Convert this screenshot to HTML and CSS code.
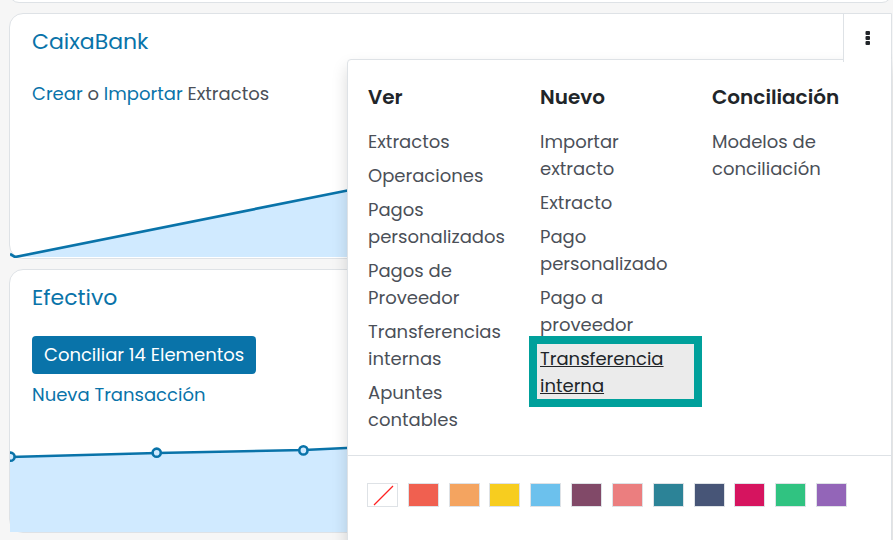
FILE: index.html
```html
<!DOCTYPE html>
<html lang="es">
<head>
<meta charset="utf-8">
<title>Contabilidad</title>
<link rel="stylesheet" href="styles.css">
</head>
<body>
<main class="board">
  <section class="card card-previous"></section>

  <section class="card card-bank">
    <header class="card-head">
      <h2 class="card-title"><a href="#">CaixaBank</a></h2>
      <button class="kebab" type="button" aria-label="Opciones" aria-expanded="true">
        <svg width="6" height="16" viewBox="0 0 6 16" aria-hidden="true"><g fill="#212529"><rect x="0.5" y="1" width="4.5" height="4" rx="1"/><rect x="0.5" y="6" width="4.5" height="4" rx="1"/><rect x="0.5" y="11" width="4.5" height="4" rx="1"/></g></svg>
      </button>
    </header>
    <p class="card-text"><a href="#">Crear</a> o <a href="#">Importar</a> Extractos</p>
    <svg class="chart chart-bank" aria-hidden="true">
      <path class="area" d="M0 73L5 75L340 8L882 -100V75H0Z"/>
      <path class="line" d="M0 72L5 75L340 8L882 -100"/>
    </svg>

    <div class="menu">
      <div class="menu-columns">
        <div class="menu-column">
          <h3>Ver</h3>
          <ul>
            <li><a href="#">Extractos</a></li>
            <li><a href="#">Operaciones</a></li>
            <li><a href="#">Pagos<br>personalizados</a></li>
            <li><a href="#">Pagos de<br>Proveedor</a></li>
            <li><a href="#">Transferencias<br>internas</a></li>
            <li><a href="#">Apuntes<br>contables</a></li>
          </ul>
        </div>
        <div class="menu-column">
          <h3>Nuevo</h3>
          <ul>
            <li><a href="#">Importar<br>extracto</a></li>
            <li><a href="#">Extracto</a></li>
            <li><a href="#">Pago<br>personalizado</a></li>
            <li><a href="#">Pago a<br>proveedor</a></li>
            <li class="selected"><a href="#">Transferencia<br>interna</a></li>
          </ul>
        </div>
        <div class="menu-column">
          <h3>Conciliación</h3>
          <ul>
            <li><a href="#">Modelos de<br>conciliación</a></li>
          </ul>
        </div>
      </div>
      <div class="swatches">
        <button class="swatch none" type="button" aria-label="Sin color"><svg width="29" height="22" viewBox="0 0 29 22" aria-hidden="true"><path d="M6 21L25 2" stroke="#f22" stroke-width="1.3"/></svg></button>
        <button class="swatch red" type="button" aria-label="Rojo"></button>
        <button class="swatch orange" type="button" aria-label="Naranja"></button>
        <button class="swatch yellow" type="button" aria-label="Amarillo"></button>
        <button class="swatch sky" type="button" aria-label="Celeste"></button>
        <button class="swatch plum" type="button" aria-label="Ciruela"></button>
        <button class="swatch salmon" type="button" aria-label="Salmón"></button>
        <button class="swatch teal" type="button" aria-label="Turquesa"></button>
        <button class="swatch navy" type="button" aria-label="Azul marino"></button>
        <button class="swatch raspberry" type="button" aria-label="Frambuesa"></button>
        <button class="swatch green" type="button" aria-label="Verde"></button>
        <button class="swatch purple" type="button" aria-label="Morado"></button>
      </div>
    </div>
  </section>

  <section class="card card-cash">
    <header class="card-head">
      <h2 class="card-title"><a href="#">Efectivo</a></h2>
    </header>
    <div class="actions">
      <button class="primary" type="button">Conciliar 14 Elementos</button>
      <a href="#">Nueva Transacción</a>
    </div>
    <svg class="chart chart-cash" aria-hidden="true">
      <path class="area" d="M0 27L147 23L294 20L441 13L882 0V102H0Z"/>
      <path class="line" d="M0 27L147 23L294 20L441 13L882 0"/>
      <g class="dots"><circle cx="0.5" cy="26.7" r="4.1"/><circle cx="146.7" cy="22.7" r="4.1"/><circle cx="293.4" cy="20.4" r="4.1"/></g>
    </svg>
  </section>
</main>
</body>
</html>
```
FILE: styles.css
```css
* {
  box-sizing: border-box;
}

body {
  margin: 0;
  min-height: 100vh;
  overflow: hidden;
  background: #f6f6f6;
  color: #4b5058;
  font: 18px/27px Poppins, Inter, sans-serif;
}

a {
  color: #0973a9;
  text-decoration: none;
}

h2,
h3,
p,
ul {
  margin: 0;
  padding: 0;
}

.board {
  display: flex;
  flex-direction: column;
  gap: 10px;
  height: 100vh;
  padding: 0 1px 0 9px;
}

.card {
  position: relative;
  display: flex;
  flex: none;
  flex-direction: column;
  background: #fff;
  border: 1px solid #dee2e6;
  border-radius: 14px;
}

.card-previous {
  height: 20px;
  margin-top: -17px;
}

.card-bank {
  z-index: 1;
  min-height: 246px;
  border-top-right-radius: 0;
}

.card-cash {
  min-height: 264px;
}

.card-head {
  display: flex;
  justify-content: space-between;
  height: 56px;
  padding: 14px 0 0 22px;
}

.card-title {
  font-size: 22px;
  font-weight: 400;
}

.card-text {
  padding: 10px 22px 0;
}

.kebab {
  position: relative;
  z-index: 2;
  display: flex;
  align-items: center;
  justify-content: center;
  width: 48px;
  height: 48px;
  margin-top: -14px;
  padding: 0;
  background: #fff;
  border: 0;
  border-left: 1px solid #dee2e6;
}

.chart {
  display: block;
  width: 100%;
  margin-top: auto;
  overflow: hidden;
}

.chart-bank {
  height: 76px;
}

.chart-cash {
  height: 102px;
}

.area {
  fill: #d0eaff;
}

.line {
  fill: none;
  stroke: #0973a9;
  stroke-width: 2.7;
}

.dots {
  fill: #d0eaff;
  stroke: #0973a9;
  stroke-width: 2.6;
}

.actions {
  display: flex;
  flex-direction: column;
  align-items: flex-start;
  gap: 7px;
  padding: 10px 22px 0;
}

.primary {
  height: 38px;
  padding: 0 12px 1px;
  background: #0973a9;
  border: 0;
  border-radius: 4px;
  color: #fff;
  font: inherit;
}

.menu {
  position: absolute;
  top: 45px;
  right: -1px;
  width: 545px;
  padding-bottom: 48px;
  background: #fff;
  border: 1px solid #dee2e6;
  border-radius: 4px 0 4px 4px;
  box-shadow: 0 8px 16px rgba(0, 0, 0, 0.15);
}

.menu-columns {
  display: grid;
  grid-template-columns: repeat(3, 1fr);
  padding: 24px 17px 22px 10px;
  border-bottom: 1px solid #dee2e6;
}

.menu-column {
  padding-left: 10px;
}

.menu-column h3 {
  margin-bottom: 17px;
  color: #212529;
  font-size: 20px;
  font-weight: 600;
}

.menu-column ul {
  display: flex;
  flex-direction: column;
  gap: 7px;
  list-style: none;
}

.menu-column a {
  color: #4b5058;
}

.selected {
  position: relative;
  z-index: 0;
}

.selected::before {
  content: "";
  position: absolute;
  z-index: -1;
  inset: -9px 0 -8px -11px;
  background: #ebebeb;
  border: 8px solid #00a09b;
}

.menu-column .selected a {
  color: #212529;
  text-decoration: underline;
}

.swatches {
  display: flex;
  justify-content: space-between;
  padding: 27px 44px 0 19px;
}

.swatch {
  width: 31px;
  height: 24px;
  padding: 0;
  border: 1px solid #dee2e6;
}

.swatch svg {
  display: block;
}

.none { background: #fff; }
.red { background: #f06050; }
.orange { background: #f4a460; }
.yellow { background: #f7cd1f; }
.sky { background: #6cc1ed; }
.plum { background: #814968; }
.salmon { background: #eb7e7f; }
.teal { background: #2c8397; }
.navy { background: #475577; }
.raspberry { background: #d6145f; }
.green { background: #30c381; }
.purple { background: #9365b8; }
```
